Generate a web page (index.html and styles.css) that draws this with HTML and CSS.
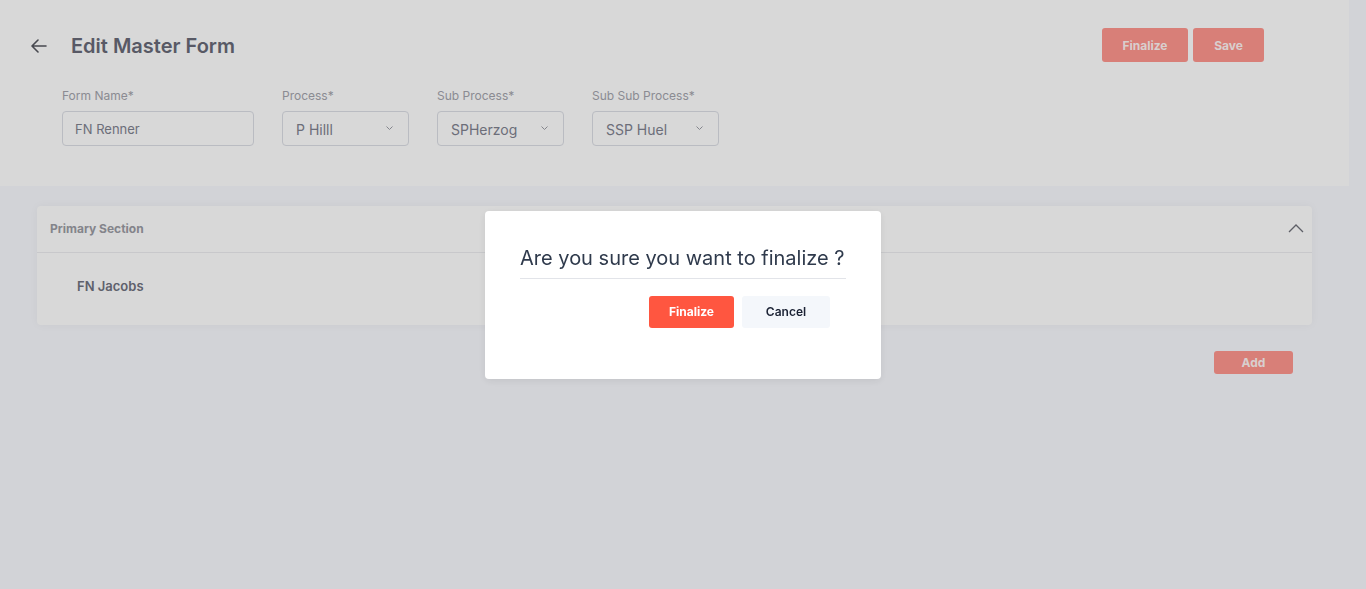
FILE: index.html
```html
<!DOCTYPE html>
<html lang="en">
<head>
<meta charset="utf-8">
<title>Edit Master Form</title>
<link rel="stylesheet" href="styles.css">
</head>
<body>
<div class="page">
  <header class="top">
    <div class="title-row">
      <div class="title-left">
        <svg class="back" width="16" height="14" viewBox="0 0 16 14"><path d="M15 7H1.5M7 1L1 7l6 6" fill="none" stroke="#55575f" stroke-width="1.6" stroke-linecap="round" stroke-linejoin="round"/></svg>
        <h1>Edit Master Form</h1>
      </div>
      <div class="actions">
        <button class="btn-faded btn-top w86">Finalize</button>
        <button class="btn-faded btn-top w70">Save</button>
      </div>
    </div>
    <div class="fields">
      <div class="field">
        <label>Form Name*</label>
        <div class="input w192">FN Renner</div>
      </div>
      <div class="field">
        <label>Process*</label>
        <div class="input select w127"><span>P Hilll</span><svg class="chev" width="7" height="4" viewBox="0 0 7 4"><path d="M0.5 0.5l3 3 3-3" fill="none" stroke="#9c9ea6" stroke-width="1"/></svg></div>
      </div>
      <div class="field">
        <label>Sub Process*</label>
        <div class="input select w127"><span>SPHerzog</span><svg class="chev" width="7" height="4" viewBox="0 0 7 4"><path d="M0.5 0.5l3 3 3-3" fill="none" stroke="#9c9ea6" stroke-width="1"/></svg></div>
      </div>
      <div class="field">
        <label>Sub Sub Process*</label>
        <div class="input select w127"><span>SSP Huel</span><svg class="chev" width="7" height="4" viewBox="0 0 7 4"><path d="M0.5 0.5l3 3 3-3" fill="none" stroke="#9c9ea6" stroke-width="1"/></svg></div>
      </div>
    </div>
  </header>

  <main class="content">
    <section class="card">
      <div class="card-head">
        <span>Primary Section</span>
        <svg width="16" height="9" viewBox="0 0 16 9"><path d="M1 8l7-7 7 7" fill="none" stroke="#6f717a" stroke-width="1.3"/></svg>
      </div>
      <div class="card-body">FN Jacobs</div>
    </section>
    <div class="add-row">
      <button class="btn-faded btn-add">Add</button>
    </div>
  </main>
</div>

<div class="overlay">
  <div class="modal">
    <h2>Are you sure you want to finalize ?</h2>
    <div class="modal-actions">
      <button class="btn-primary">Finalize</button>
      <button class="btn-cancel">Cancel</button>
    </div>
  </div>
</div>
</body>
</html>
```

FILE: styles.css
```css
* { box-sizing: border-box; }
html, body { margin: 0; padding: 0; }
body {
  font-family: Inter, "Noto Sans", sans-serif;
  background: #f8f9fe;
  height: 589px;
  overflow: hidden;
}
button { font-family: inherit; border: 0; cursor: pointer; }

.page { width: 1349px; }

.top {
  background: #ffffff;
  height: 186px;
  padding: 29px 85px 0 31px;
}
.title-row {
  display: flex;
  align-items: center;
  justify-content: space-between;
  height: 34px;
}
.title-left { display: flex; align-items: center; }
.back { margin-right: 24px; }
h1 {
  margin: 0;
  font-size: 20px;
  font-weight: 600;
  color: #686a78;
}
.actions { display: flex; gap: 5px; margin-top: -2px; }
.btn-faded {
  background: #ff968e;
  color: rgba(255, 255, 255, 0.92);
  font-weight: 700;
  font-size: 12px;
  border-radius: 3px;
}
.btn-top { height: 34px; }
.w86 { width: 86px; }
.w70 { width: 71px; }

.fields {
  display: flex;
  gap: 28px;
  margin: 25px 0 0 31px;
}
.field { display: flex; flex-direction: column; gap: 8px; }
.field label {
  font-size: 12px;
  line-height: 15px;
  color: #a4a5ad;
}
.input {
  height: 35px;
  border: 1px solid #dcdee5;
  border-radius: 4px;
  display: flex;
  align-items: center;
  padding: 1px 12px 0 12px;
  font-size: 13px;
  color: #80828f;
}
.select {
  justify-content: space-between;
  padding: 2px 15px 0 13px;
  font-size: 14px;
}
.chev { margin-bottom: 3px; }
.w192 { width: 192px; }
.w127 { width: 127px; }

.content { padding: 20px 37px 0 37px; }
.card {
  background: #ffffff;
  border-radius: 4px;
  box-shadow: 0 0 10px rgba(0, 0, 0, 0.04);
}
.card-head {
  height: 47px;
  display: flex;
  align-items: center;
  justify-content: space-between;
  padding: 0 8px 1px 13px;
  border-bottom: 1px solid #ecedf0;
  font-size: 12px;
  font-weight: 700;
  color: #9b9ca4;
}
.card-body {
  height: 72px;
  padding: 25px 0 0 40px;
  font-size: 13px;
  line-height: 16px;
  font-weight: 600;
  color: #70727f;
}
.add-row {
  display: flex;
  justify-content: flex-end;
  padding: 26px 19px 0 0;
}
.btn-add { width: 79px; height: 23px; }

.overlay {
  position: fixed;
  inset: 0;
  background: rgba(0, 0, 0, 0.153);
  display: flex;
  align-items: center;
  justify-content: center;
}
.modal {
  width: 396px;
  height: 168px;
  background: #ffffff;
  border-radius: 4px;
  box-shadow: 0 2px 8px rgba(0, 0, 0, 0.08);
  padding: 35px 35px 0 35px;
}
.modal h2 {
  margin: 0;
  font-size: 20px;
  line-height: 24px;
  font-weight: 400;
  color: #2f3a4c;
  padding-bottom: 8px;
  border-bottom: 1px solid #e2e4e9;
}
.modal-actions {
  display: flex;
  justify-content: flex-end;
  gap: 8px;
  padding: 17px 16px 0 0;
}
.btn-primary {
  width: 85px;
  height: 32px;
  background: #ff5640;
  color: #ffffff;
  font-size: 12px;
  font-weight: 700;
  border-radius: 3px;
}
.btn-cancel {
  width: 88px;
  height: 32px;
  background: #f4f7fb;
  color: #1b2234;
  font-size: 12px;
  font-weight: 600;
  border-radius: 3px;
}
```
